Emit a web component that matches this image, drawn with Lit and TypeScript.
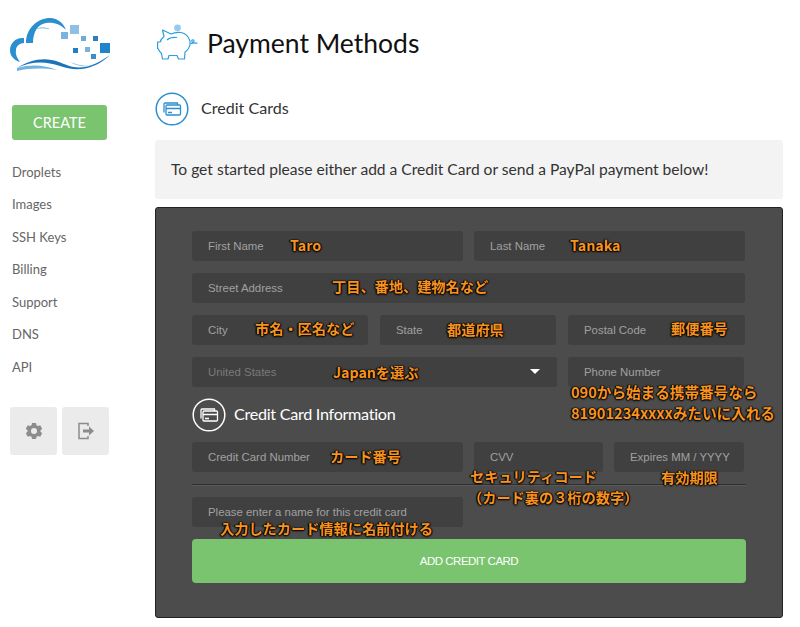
import { LitElement, html, css, svg } from 'lit';
import { customElement } from 'lit/decorators.js';

const NAV = ['Droplets', 'Images', 'SSH Keys', 'Billing', 'Support', 'DNS', 'API'];

// hand written notes on top of the form: [text, left, center y] in card coords
const NOTES: [string, number, number][] = [
  ['Taro', 134, 37],
  ['Tanaka', 414, 37],
  ['丁目、番地、建物名など', 176, 78],
  ['市名・区名など', 99, 120],
  ['都道府県', 291, 121],
  ['郵便番号', 515, 120],
  ['Japanを選ぶ', 177, 164],
  ['090から始まる携帯番号なら', 415, 184],
  ['81901234xxxxみたいに入れる', 415, 205],
  ['カード番号', 174, 248],
  ['セキュリティコード', 314, 268],
  ['（カード裏の３桁の数字）', 312, 289],
  ['有効期限', 505, 269],
  ['入力したカード情報に名前付ける', 64, 320],
];

const cardsIcon = (color: string) => svg`
  <svg class="round-icon" viewBox="0 0 34 34" fill="none" stroke=${color}>
    <circle cx="17" cy="17" r="15.8" stroke-width="1.5"></circle>
    <path d="M9 20.5v-8.5a1 1 0 0 1 1-1h12.5v2" stroke-width="1.3"></path>
    <rect x="11" y="13" width="14.5" height="10" rx="1" stroke-width="1.3"></rect>
    <path d="M11 16.5h14.5M13 20.5h4" stroke-width="1.3"></path>
  </svg>`;

const logo = svg`
  <svg class="logo" viewBox="0 0 120 105" fill="none">
    <path d="M26 43C26 28 38 18 50 18c8 0 14 6 16 12-6-6-12-8-20-7-8 1-13 9-13 20z" fill="#2b8fcf"></path>
    <path d="M35 29c5-2 11-2 15 0-5-1-10-1-15 0z" fill="#5aa9dc"></path>
    <path d="M24 38c-8-1-14 5-14 12 0 6 4 10 10 12-3-4-5-8-4-12 0-4 4-7 8-7z" fill="#2b8fcf"></path>
    <path d="M17 68c14-9 28-11 42-6 13 5 24 12 51-7-18 17-36 16-50 11-15-5-28-5-43 2z" fill="#1a74bb"></path>
    <path d="M17 68c14-4 28-3 40 2-14-2-27-2-40 1z" fill="#6fb4e0"></path>
    <path d="M70 62c10 4 20 5 28 2-9 4-20 3-28-2z" fill="#8cc3e8"></path>
    <rect x="61" y="32" width="7" height="7" fill="#7ab3dc"></rect>
    <rect x="70" y="25" width="9" height="9" fill="#8fbfe2"></rect>
    <rect x="81" y="36" width="5" height="5" fill="#6fa9d6"></rect>
    <rect x="93" y="36" width="5" height="5" fill="#2b7fc0"></rect>
    <rect x="100" y="43" width="10" height="10" fill="#1f85cb"></rect>
    <rect x="73" y="48" width="5" height="5" fill="#1f7fc4"></rect>
    <rect x="85" y="47" width="5" height="5" fill="#7ab3dc"></rect>
    <rect x="91" y="54" width="5" height="5" fill="#3d8cc6"></rect>
  </svg>`;

const piggy = svg`
  <svg class="piggy" viewBox="0 0 41 38" fill="none" stroke="#2d9fdc" stroke-width="1.2" stroke-linejoin="round">
    <circle cx="20.500" cy="3.800" r="3.400" fill="#8fcdf0" stroke="none"></circle>
    <path d="M5.500 6l8.500 4c3-1.500 6.500-2 10-1.500 4 .7 7.500 4 9 8.500.5 2.500 0 5-1.500 7.500-1 1.500-2.500 3-3.500 3.500l-.5 7h-6l-1.500-3.500h-8l-1 3.500H5.500l-1-5.500C3 28.500 2 26.500 1 24.500H.6v-6.500h2.600C4 15.500 5 14 7 12.500z"></path>
    <path d="M10 16c2-2 6-3 10-2.500"></path>
    <path d="M33.500 19.500c2 0 3.500-1 3.500-2.500s-2.200-1.800-2.200 0 2.500 2.500 5.700 2"></path>
  </svg>`;

@customElement('app-root')
export class AppRoot extends LitElement {
  static styles = css`
    :host {
      display: block;
      height: 627px;
      overflow: hidden;
      background: #fff;
      font-family: Lato, 'Noto Sans', sans-serif;
    }
    .page { display: grid; grid-template-columns: 155px 628px; }

    .logo { display: block; width: 120px; height: 105px; }
    .create {
      width: 95px;
      height: 35px;
      margin-left: 12px;
      border-radius: 3px;
      background: #7ac36f;
      color: #fff;
      font-size: 14.5px;
      line-height: 35px;
      text-align: center;
    }
    nav { margin: 15.5px 0 0 12px; }
    nav div { height: 32.5px; line-height: 32.5px; font-size: 13px; color: #666; }
    .tools { display: flex; gap: 5px; margin: 24px 0 0 10px; }
    .tool {
      width: 47px;
      height: 48px;
      border-radius: 3px;
      background: #ebebeb;
      display: flex;
      align-items: center;
      justify-content: center;
    }
    .tool svg { width: 18px; height: 18px; }

    main { padding-top: 20px; color: #222; }
    .title { display: flex; align-items: center; height: 46px; gap: 9px; padding-left: 2px; }
    .piggy { width: 41px; height: 38px; flex: none; }
    h1 { margin: 0; font-size: 26.5px; font-weight: 400; color: #111; }
    .section { display: flex; align-items: center; gap: 12px; height: 34px; margin-top: 26px; }
    .section span { font-size: 16.1px; color: #333; margin-top: -3px; }
    .round-icon { width: 34px; height: 34px; flex: none; }
    .banner {
      height: 59px;
      margin-top: 14px;
      padding-left: 16px;
      border-radius: 3px;
      background: #f3f3f3;
      color: #333;
      font-size: 15.6px;
      line-height: 59px;
    }

    .card {
      position: relative;
      box-sizing: border-box;
      height: 411px;
      margin-top: 8px;
      padding: 23px 36px 0;
      border: 1px solid #222;
      border-radius: 3px;
      background: #4c4c4c;
      font-family: 'Liberation Sans', sans-serif;
    }
    .row { display: grid; column-gap: 11px; margin-bottom: 12px; }
    .two { grid-template-columns: 271px 271px; }
    .one { grid-template-columns: 553px; }
    .three { grid-template-columns: 176px 176px 177px; column-gap: 12px; }
    .wide { grid-template-columns: 365px 176px; }
    .pay { grid-template-columns: 271px 129px 130px; }
    .field {
      position: relative;
      height: 30px;
      padding-left: 16px;
      border-radius: 3px;
      background: #404040;
      color: #a0a0a0;
      font-size: 11.4px;
      line-height: 31px;
    }
    .field.muted { color: #7a7a7a; }
    .caret {
      position: absolute;
      right: 17px;
      top: 12px;
      border: 5px solid transparent;
      border-top: 5px solid #fff;
      border-bottom: 0;
    }
    .info { display: flex; align-items: center; gap: 8px; height: 34px; margin: -1px 0 10px; }
    .info span { color: #fff; font-family: Lato, sans-serif; font-size: 16.2px; letter-spacing: -0.3px; margin-top: -4px; }
    hr { margin: 0 0 11px; border: 0; border-top: 1px solid #2f2f2f; border-bottom: 1px solid #5a5a5a; }
    .add {
      height: 44px;
      border-radius: 4px;
      background: #7ac36f;
      color: #fff;
      font-size: 11.5px;
      line-height: 44px;
      text-align: center;
      letter-spacing: -0.5px;
    }

    .note {
      position: absolute;
      transform: translateY(-50%);
      white-space: nowrap;
      color: #f7931e;
      font-family: 'Noto Sans CJK JP', sans-serif;
      font-size: 14.2px;
      font-weight: 700;
      line-height: 18px;
      text-shadow: 0 0 2px #000, 0 1px 2px #000, 1px 0 1px #000, -1px 0 1px #000;
    }
    .note.digits { font-size: 14.6px; }
  `;

  render() {
    return html`
      <div class="page">
        <aside>
          ${logo}
          <div class="create">CREATE</div>
          <nav>${NAV.map(n => html`<div>${n}</div>`)}</nav>
          <div class="tools">
            <div class="tool">
              <svg viewBox="0 0 18 18">
                <path fill="#8c8c8c" fill-rule="evenodd" d="M7 1h4l.5 2.300 1.500.8 2.200-.8 2 3.400-1.700 1.600v1.400l1.700 1.600-2 3.400-2.200-.8-1.500.8L11 17H7l-.5-2.300-1.500-.8-2.200.8-2-3.400 1.700-1.600V8.300L.8 6.700l2-3.400 2.200.8 1.500-.8zM9 6a3 3 0 1 0 0 6 3 3 0 0 0 0-6z"></path>
              </svg>
            </div>
            <div class="tool">
              <svg viewBox="0 0 18 18" fill="none" stroke="#8c8c8c" stroke-width="1.500">
                <path d="M11 4V1.500H2v15h9V14"></path>
                <path d="M6 7.500h6V4.500L17 9l-5 4.500v-3H6z" fill="#8c8c8c" stroke="none"></path>
              </svg>
            </div>
          </div>
        </aside>
        <main>
          <div class="title">${piggy}<h1>Payment Methods</h1></div>
          <div class="section">${cardsIcon('#2d8fcf')}<span>Credit Cards</span></div>
          <div class="banner">To get started please either add a Credit Card or send a PayPal payment below!</div>
          <div class="card">
            <div class="row two"><div class="field">First Name</div><div class="field">Last Name</div></div>
            <div class="row one"><div class="field">Street Address</div></div>
            <div class="row three">
              <div class="field">City</div><div class="field">State</div><div class="field">Postal Code</div>
            </div>
            <div class="row wide">
              <div class="field muted">United States<i class="caret"></i></div>
              <div class="field">Phone Number</div>
            </div>
            <div class="info">${cardsIcon('#fff')}<span>Credit Card Information</span></div>
            <div class="row pay">
              <div class="field">Credit Card Number</div><div class="field">CVV</div><div class="field">Expires MM / YYYY</div>
            </div>
            <hr />
            <div class="row two"><div class="field">Please enter a name for this credit card</div></div>
            <div class="add">ADD CREDIT CARD</div>
            ${NOTES.map(([t, x, y]) => html`<div class="note ${/^\d/.test(t) ? 'digits' : ''}" style="left:${x}px;top:${y}px">${t}</div>`)}
          </div>
        </main>
      </div>
    `;
  }
}
